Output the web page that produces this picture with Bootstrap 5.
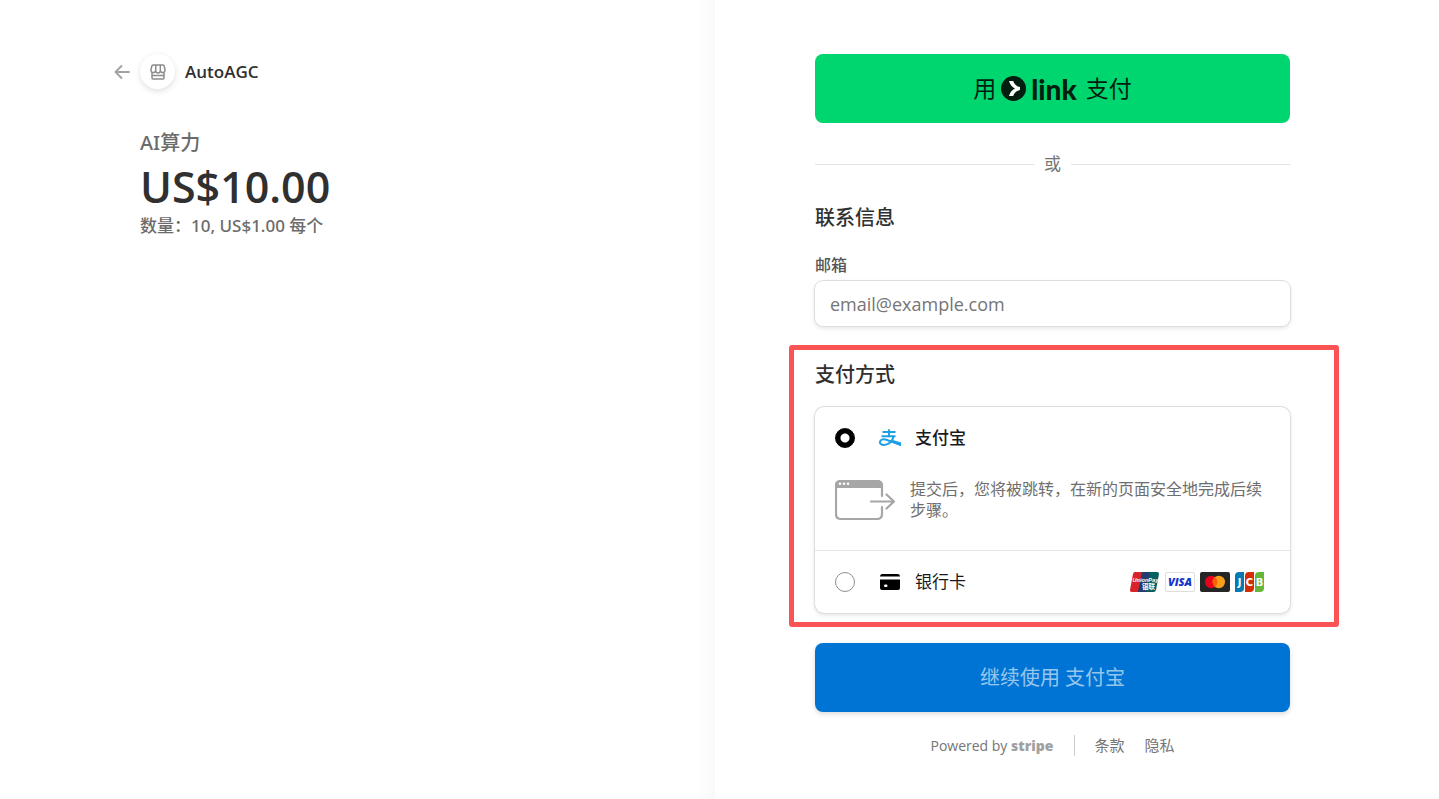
<!DOCTYPE html>
<html lang="zh-CN">
<head>
<meta charset="utf-8">
<meta name="viewport" content="width=device-width, initial-scale=1">
<title>AutoAGC</title>
<link href="https://cdn.jsdelivr.net/npm/bootstrap@5.3.0/dist/css/bootstrap.min.css" rel="stylesheet">
<style>
  body { font-family: "Open Sans", "Noto Sans CJK SC", sans-serif; color: #303030; background: #fff; padding-right: 9px; font-size: 16px; }
  .pane { flex: 1 1 50%; min-width: 0; }
  .pane-inner { max-width: 475px; }
  .pane-summary { background: linear-gradient(to left, #f9f9f9, #fff 16px); padding: 54px 100px 40px 40px; }
  .pane-pay { padding: 54px 40px 40px 100px; }
  .merchant { margin-left: -26px; gap: 10px; color: #303030; font-size: 17px; line-height: 35px; font-weight: 600; }
  .store { width: 35px; height: 35px; box-shadow: 0 2px 6px rgba(0,0,0,.13); }
  .product, .quantity { font-family: "Noto Sans", "Noto Sans CJK SC", sans-serif; color: #6b6b6b; font-weight: 500; }
  .product { margin-top: 41px; font-size: 20px; line-height: 26px; }
  .price { font-size: 43px; line-height: 62px; font-weight: 600; }
  .quantity { font-size: 17px; line-height: 16px; }
  .big-btn { height: 69px; border: 0; border-radius: 8px; }
  .link-btn { background: #00d66f; color: #011e0f; font-size: 23px; gap: 5px; }
  .link-btn:hover { background: #00c767; }
  .link-word { font-family: Lato, sans-serif; font-weight: 900; font-size: 28px; line-height: 30px; margin-right: 4px; }
  .or-line { gap: 10px; margin-top: 28px; font-size: 17px; line-height: 26px; color: #757575; }
  .or-line hr { margin: 0; flex: 1; opacity: 1; border-top-color: #e3e3e3; }
  .sect-title { font-size: 20px; line-height: 28px; font-weight: 500; margin: 0; }
  .contact { margin-top: 27px; }
  .mail-label { display: block; margin-top: 22px; font-size: 16px; line-height: 22px; font-weight: 500; color: #555; margin-bottom: 5px; }
  .mail { height: 45px; padding: 0 15px; border: 0; border-radius: 8px; font-size: 18px; box-shadow: 0 0 0 1px #dedede, 0 2px 5px rgba(0,0,0,.12); }
  .mail::placeholder { color: #757575; }
  .methods { margin-top: 35px; position: relative; }
  .callout-frame { position: absolute; inset: -16px -49px -14px -26px; border: 5px solid #fb5454; border-radius: 3px; pointer-events: none; }
  .method-list { margin-top: 18px; border-radius: 9px; overflow: hidden; box-shadow: 0 0 0 1px #dedede, 0 2px 5px rgba(0,0,0,.12); }
  .method { height: 62px; padding: 0 25px 0 20px; font-size: 17px; line-height: 24px; color: #1a1a1a; }
  .redirect + .method { border-top: 1px solid #e6e6e6; height: 63px; }
  .method .form-check-input { width: 20px; height: 20px; margin: 0; border: 1px solid #8f8f8f; flex: none; }
  .method .form-check-input:checked { background: radial-gradient(circle, #fff 4px, #000 5px); border-color: #000; }
  .method label { margin-left: 14px; }
  .method input:checked ~ label { font-weight: 500; }
  .method-icon { margin-left: 24px; flex: none; }
  .brands { gap: 5px; }
  .redirect { padding: 10px 20px 29px; gap: 15px; line-height: 21px; color: #6e6e6e; }
  .submit-btn { background: #0074d4; color: rgba(255,255,255,.6); margin-top: 30px; font-size: 20px; box-shadow: 0 2px 5px rgba(0,0,0,.15); }
  .submit-btn:hover { background: #0069c0; color: rgba(255,255,255,.7); }
  .foot { margin-top: 23px; gap: 20px; font-size: 14px; line-height: 21px; color: #757575; }
  .foot a { color: #757575; font-size: 15px; }
  .stripe-word { font-family: "Open Sans", sans-serif; font-weight: 800; font-size: 14px; color: #a0a0a0; }
  .foot-rule { width: 1px; height: 21px; background: #ccc; }
</style>
</head>
<body>
<div class="d-flex min-vh-100">
  <section class="pane pane-summary d-flex justify-content-end">
    <div class="pane-inner w-100">
      <a href="#" class="merchant d-flex align-items-center text-decoration-none">
        <svg width="16" height="16" viewBox="0 0 16 16" fill="none" stroke="#a3a3a3" stroke-width="1.9" stroke-linecap="round" stroke-linejoin="round" aria-hidden="true"><path d="M15 8H1.500M7.500 2L1.500 8l6 6"/></svg>
        <span class="store rounded-circle bg-white d-flex align-items-center justify-content-center">
          <svg width="16" height="16" viewBox="0 0 16 16" fill="none" stroke="#8c8c8c" stroke-width="1.500" stroke-linejoin="round" aria-hidden="true"><path d="M3 1h10q1 0 1.200 1L15 6a2.200 2.200 0 0 1-4.600.6 2.400 2.400 0 0 1-4.800 0A2.200 2.200 0 0 1 1 6l.8-4Q2 1 3 1zM5.800 1v5.500M10.300 1v5.500M2 8.500V14q0 1 1 1h10q1 0 1-1V8.500M2 11.500h12"/></svg>
        </span>
        <span>AutoAGC</span>
      </a>
      <div class="product">AI算力</div>
      <div class="price">US$10.00</div>
      <div class="quantity">数量：10, US$1.00 每个</div>
    </div>
  </section>

  <main class="pane pane-pay">
    <form class="pane-inner">
      <button type="button" class="btn big-btn link-btn w-100 d-flex align-items-center justify-content-center">
        <span>用</span>
        <svg width="25" height="25" viewBox="0 0 25 25" aria-hidden="true"><circle cx="12.500" cy="12.500" r="12.500" fill="#011e0f"/><path d="M12.200 5H8c.8 3.300 3 6 6 7.500-3 1.500-5.200 4.200-6 7.500h4.200c1-2.900 3.400-5.400 6.800-6v-3c-3.400-.6-5.800-3.100-6.800-6z" fill="#fff"/></svg>
        <span class="link-word">link</span>
        <span>支付</span>
      </button>
      <div class="or-line d-flex align-items-center"><hr><span>或</span><hr></div>

      <h2 class="sect-title contact">联系信息</h2>
      <label class="mail-label" for="email">邮箱</label>
      <input class="form-control mail" type="email" id="email" placeholder="email@example.com">

      <section class="methods">
        <h2 class="sect-title">支付方式</h2>
        <div class="method-list">
          <div class="method d-flex align-items-center">
            <input class="form-check-input" type="radio" name="method" id="alipay" checked>
            <svg class="method-icon" width="22" height="18" viewBox="0 0 22 18" fill="none" stroke="#1c9fe5" aria-hidden="true"><path d="M3.500 3h13M10 .3v6.500M2.500 7.200h14" stroke-width="1.900"/><path d="M14.800 7.200C13.500 12 9.500 16 5 16c-3 0-4.200-1.500-4-3.100.3-2.200 2.800-3 5.200-2.500 4 .8 9.500 3.400 15 5.100" stroke-width="2"/><path d="M14 11l8 2.500v3.800l-10-4z" fill="#1c9fe5" stroke="none"/></svg>
            <label for="alipay">支付宝</label>
          </div>
          <div class="redirect d-flex">
            <svg class="flex-shrink-0" width="60" height="42" viewBox="0 0 60 42" fill="none" stroke="#a6a6a6" stroke-width="2.200" stroke-linecap="round" stroke-linejoin="round" aria-hidden="true"><path d="M47 17V7q0-5-5-5H6Q1 2 1 7v28q0 5 5 5h36q5 0 5-5v-7"/><path d="M1 8V6.500Q1 2 6 2h36q5 0 5 4.500V8z" fill="#a6a6a6"/><path d="M36 22.500h23M51.500 15.500l7.500 7-7.500 7"/><g fill="#fff" stroke="none"><circle cx="5" cy="4.800" r="1.300"/><circle cx="9" cy="4.800" r="1.300"/><circle cx="13" cy="4.800" r="1.300"/></g></svg>
            <div>提交后，您将被跳转，在新的页面安全地完成后续步骤。</div>
          </div>
          <div class="method d-flex align-items-center">
            <input class="form-check-input" type="radio" name="method" id="bankcard">
            <svg class="method-icon" width="22" height="16" viewBox="0 0 22 16" aria-hidden="true"><path d="M1 2.500Q1 0 3 0h16q2 0 2 2.500zM1 5.500h20V14q0 2-2 2H3q-2 0-2-2z"/><rect x="5" y="10.500" width="3.500" height="2.500" rx="1.200" fill="#fff"/></svg>
            <label for="bankcard">银行卡</label>
            <div class="brands ms-auto d-flex">
              <svg width="30" height="20" viewBox="0 0 30 20" role="img" aria-label="UnionPay"><path d="M5 0h9l-4 20H2q-2.300 0-2-2L3 2Q3.300 0 5 0z" fill="#d9222a"/><path d="M12 0h9l-4 20H8z" fill="#243a70"/><path d="M20 0h7q2.300 0 2 2l-3 16q-.3 2-2.500 2H16z" fill="#07615f"/><text x="2.500" y="9.500" font-family="Liberation Sans" font-size="5.600" font-weight="700" font-style="italic" fill="#fff">UnionPay</text><text x="12" y="17" font-family="Noto Sans CJK SC" font-size="6.500" font-weight="700" fill="#fff">银联</text></svg>
              <svg width="30" height="20" viewBox="0 0 30 20" role="img" aria-label="Visa"><rect x=".5" y=".5" width="29" height="19" rx="1.500" fill="#fff" stroke="#dedede"/><text x="15" y="14" text-anchor="middle" font-family="Open Sans" font-size="11" font-weight="800" font-style="italic" fill="#1434cb">VISA</text></svg>
              <svg width="30" height="20" viewBox="0 0 30 20" role="img" aria-label="Mastercard"><rect width="30" height="20" rx="2" fill="#252525"/><circle cx="11.200" cy="10" r="6.200" fill="#eb001b"/><circle cx="18.800" cy="10" r="6.200" fill="#f79e1b"/><path d="M15 5.100a6.200 6.200 0 0 1 0 9.800 6.200 6.200 0 0 1 0-9.800z" fill="#ff5f00"/></svg>
              <svg width="30" height="20" viewBox="0 0 30 20" role="img" aria-label="JCB"><path d="M4 0h5v16q0 4-4 4H0V4q0-4 4-4z" fill="#047ab1"/><path d="M14 0h5v16q0 4-4 4h-5V4q0-4 4-4z" fill="#d42d06"/><path d="M24 0h5v16q0 4-4 4h-5V4q0-4 4-4z" fill="#67b637"/><g font-family="DejaVu Sans" font-size="10" font-weight="700" fill="#fff" text-anchor="middle"><text x="4.500" y="13.600">J</text><text x="14.500" y="13.600">C</text><text x="24.500" y="13.600">B</text></g></svg>
            </div>
          </div>
        </div>
        <div class="callout-frame"></div>
      </section>

      <button type="submit" class="btn big-btn submit-btn w-100">继续使用 支付宝</button>
      <footer class="foot d-flex align-items-center justify-content-center">
        <span>Powered by <span class="stripe-word">stripe</span></span>
        <span class="foot-rule"></span>
        <a href="#" class="text-decoration-none">条款</a>
        <a href="#" class="text-decoration-none">隐私</a>
      </footer>
    </form>
  </main>
</div>
<script src="https://cdn.jsdelivr.net/npm/bootstrap@5.3.0/dist/js/bootstrap.bundle.min.js"></script>
</body>
</html>
